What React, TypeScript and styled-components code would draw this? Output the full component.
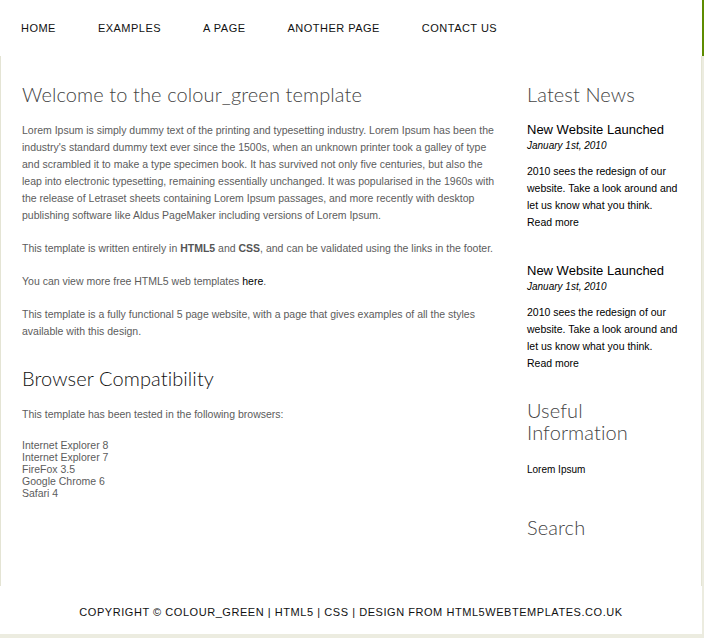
import React from "react";
import styled, { createGlobalStyle } from "styled-components";

const GlobalStyle = createGlobalStyle`
  html, body { margin: 0; padding: 0; }
  body {
    background: #ecece0;
    font-family: "Liberation Sans", Arial, sans-serif;
  }
  * { box-sizing: border-box; }
`;

const Page = styled.div`
  width: 702px;
`;

const Header = styled.header`
  width: 704px;
  height: 56px;
  background: #ffffff;
  border-right: 2px solid #5e8c00;
`;

const NavList = styled.ul`
  display: flex;
  list-style: none;
  margin: 0;
  padding: 0;
  height: 55px;
  align-items: center;
`;

const NavItem = styled.li`
  padding: 0 21px;
  font-family: "Liberation Sans", Arial, sans-serif;
  font-size: 11px;
  letter-spacing: 0.48px;
  text-transform: uppercase;
  color: #111;
`;

const Content = styled.div`
  display: flex;
  height: 530px;
  background: #ffffff;
  border-left: 1px solid #e4e4d4;
  border-right: 1px solid #e4e4d4;
  padding-left: 21px;
`;

const Main = styled.main`
  width: 476px;
  padding-top: 27px;
`;

const Sidebar = styled.aside`
  width: 160px;
  margin-left: 29px;
  padding-top: 27px;
`;

const Heading = styled.h1<{ $dark?: boolean; $mt?: number; $mb?: number }>`
  font-family: "Lato", "Liberation Sans", sans-serif;
  font-weight: 300;
  font-size: 20px;
  line-height: 22px;
  letter-spacing: 0.1px;
  color: ${(p) => (p.$dark ? "#111" : "#444")};
  margin: ${(p) => p.$mt ?? 0}px 0 ${(p) => p.$mb ?? 17}px;
`;

const Para = styled.p<{ $mb?: number }>`
  font-family: "Liberation Sans", Arial, sans-serif;
  font-size: 10.5px;
  line-height: 17px;
  color: #5c5c5c;
  margin: 0 0 ${(p) => p.$mb ?? 16}px;
`;

const Strong = styled.strong`
  font-weight: bold;
  color: #555;
`;

const Link = styled.a`
  color: #000;
  text-decoration: none;
`;

const BrowserList = styled.ul`
  list-style: none;
  margin: 0;
  padding: 0;
  font-family: "Liberation Sans", Arial, sans-serif;
  font-size: 10.5px;
  line-height: 12px;
  color: #5c5c5c;
`;

const NewsTitle = styled.h3<{ $mt?: number }>`
  font-family: "Liberation Sans", Arial, sans-serif;
  font-weight: 400;
  font-size: 13px;
  line-height: 17px;
  color: #000;
  margin: ${(p) => p.$mt ?? 0}px 0 0;
`;

const NewsDate = styled.div`
  font-family: "Liberation Sans", Arial, sans-serif;
  font-style: italic;
  font-size: 10px;
  line-height: 16px;
  color: #000;
  margin-bottom: 9px;
`;

const NewsText = styled.p`
  font-family: "Liberation Sans", Arial, sans-serif;
  font-size: 10.5px;
  line-height: 17px;
  color: #000;
  margin: 0;
`;

const SideLink = styled.a`
  display: block;
  color: #000;
  text-decoration: none;
`;

const SideList = styled.ul`
  list-style: none;
  margin: 0;
  padding: 0;
  font-family: "Liberation Sans", Arial, sans-serif;
  font-size: 10px;
  line-height: 16px;
  color: #000;
`;

const Footer = styled.footer`
  height: 48px;
  padding-top: 4px;
  background: #ffffff;
  display: flex;
  align-items: center;
  justify-content: center;
  font-family: "Liberation Sans", Arial, sans-serif;
  font-size: 11px;
  letter-spacing: 0.55px;
  text-transform: uppercase;
  color: #111;
`;

const navItems = ["Home", "Examples", "A Page", "Another Page", "Contact Us"];
const browsers = [
  "Internet Explorer 8",
  "Internet Explorer 7",
  "FireFox 3.5",
  "Google Chrome 6",
  "Safari 4",
];

const NewsItem: React.FC<{ mt?: number }> = ({ mt }) => (
  <>
    <NewsTitle $mt={mt}>New Website Launched</NewsTitle>
    <NewsDate>January 1st, 2010</NewsDate>
    <NewsText>
      2010 sees the redesign of our website. Take a look around and let us know what you think.
      <SideLink href="#">Read more</SideLink>
    </NewsText>
  </>
);

export default function App() {
  return (
    <>
      <GlobalStyle />
      <Page>
        <Header>
          <NavList>
            {navItems.map((n) => (
              <NavItem key={n}>{n}</NavItem>
            ))}
          </NavList>
        </Header>
        <Content>
          <Main>
            <Heading>Welcome to the colour_green template</Heading>
            <Para>
              Lorem Ipsum is simply dummy text of the printing and typesetting industry. Lorem Ipsum has been the
              industry's standard dummy text ever since the 1500s, when an unknown printer took a galley of type
              and scrambled it to make a type specimen book. It has survived not only five centuries, but also the
              leap into electronic typesetting, remaining essentially unchanged. It was popularised in the 1960s with
              the release of Letraset sheets containing Lorem Ipsum passages, and more recently with desktop
              publishing software like Aldus PageMaker including versions of Lorem Ipsum.
            </Para>
            <Para>
              This template is written entirely in <Strong>HTML5</Strong> and <Strong>CSS</Strong>, and can be
              validated using the links in the footer.
            </Para>
            <Para>
              You can view more free HTML5 web templates <Link href="#">here</Link>.
            </Para>
            <Para $mb={0}>
              This template is a fully functional 5 page website, with a page that gives examples of all the styles
              available with this design.
            </Para>
            <Heading as="h2" $dark $mt={27} $mb={17}>
              Browser Compatibility
            </Heading>
            <Para>This template has been tested in the following browsers:</Para>
            <BrowserList>
              {browsers.map((b) => (
                <li key={b}>{b}</li>
              ))}
            </BrowserList>
          </Main>
          <Sidebar>
            <Heading as="h2" $mb={16}>
              Latest News
            </Heading>
            <NewsItem />
            <NewsItem mt={31} />
            <Heading as="h2" $mt={27} $mb={19}>
              Useful Information
            </Heading>
            <SideList>
              <li>Lorem Ipsum</li>
            </SideList>
            <Heading as="h2" $mt={38}>
              Search
            </Heading>
          </Sidebar>
        </Content>
        <Footer>Copyright © colour_green | HTML5 | CSS | Design from HTML5webtemplates.co.uk</Footer>
      </Page>
    </>
  );
}
